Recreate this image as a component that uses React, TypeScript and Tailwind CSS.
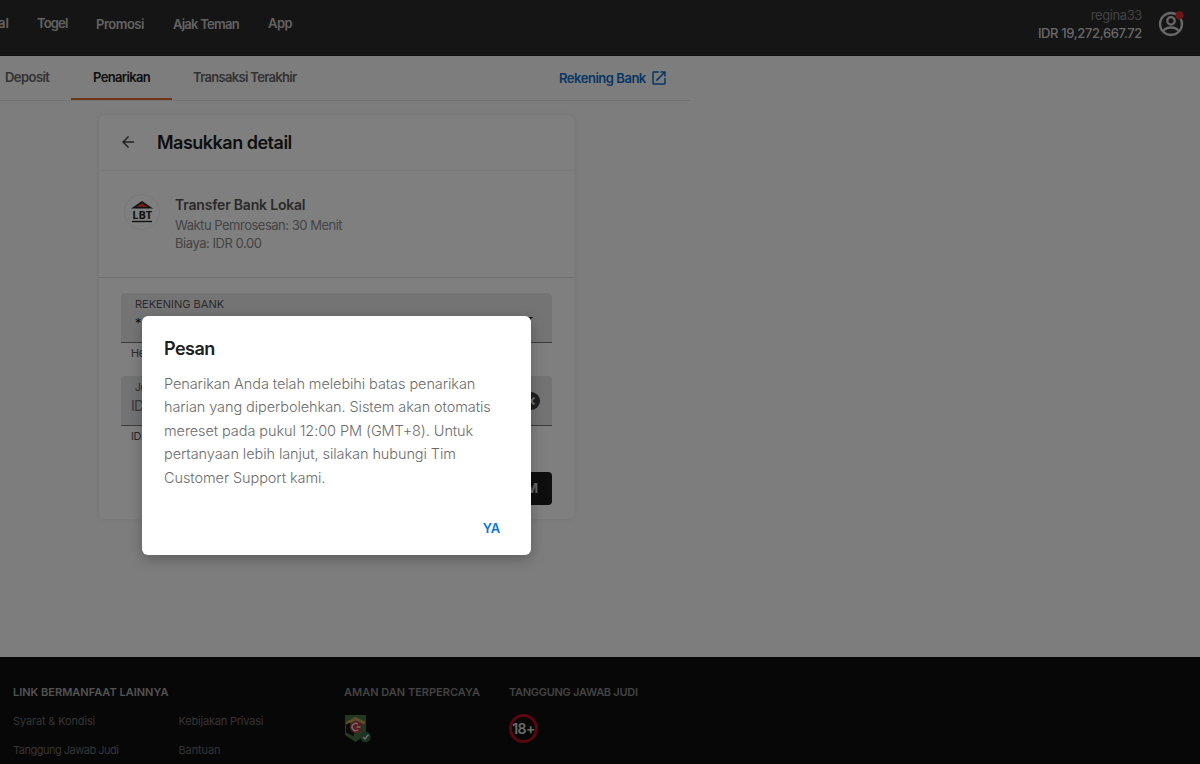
import clsx from 'clsx';
import { MdArrowBack, MdOpenInNew } from 'react-icons/md';

const navItems = [
  { label: 'al', className: 'ml-[-2px] w-[39px]' },
  { label: 'Togel', className: 'w-[59px] tracking-[-0.850px]' },
  { label: 'Promosi', className: 'w-[77px] pt-px tracking-[-0.5px]' },
  { label: 'Ajak Teman', className: 'w-[95px] pt-px tracking-[-0.750px]' },
  { label: 'App', className: 'tracking-[-0.550px]' },
];

const footerLinks = [
  { label: 'Syarat & Kondisi', className: 'tracking-[-0.150px]' },
  { label: 'Kebijakan Privasi', className: 'tracking-[-0.200px]' },
  { label: 'Tanggung Jawab Judi', className: 'tracking-[-0.500px]' },
  { label: 'Bantuan', className: 'tracking-[-0.100px]' },
];

const UserIcon = () => (
  <svg width="26" height="26" viewBox="0 0 26 26" fill="none">
    <g stroke="#d0d0d0" strokeWidth="2.3">
      <circle cx="13" cy="13" r="11" />
      <circle cx="13" cy="9.8" r="3.7" />
      <path d="M5.2 20.2c1.5-2.4 4.4-3.7 7.8-3.7s6.300 1.300 7.800 3.700" />
    </g>
    <circle cx="21.500" cy="4.300" r="4" fill="#d32f36" />
  </svg>
);

const BankLogo = () => (
  <svg width="36" height="36" viewBox="0 0 36 36">
    <circle cx="18" cy="18" r="17.500" fill="#fff" stroke="#eee" />
    <path d="M7 14.500 18 7l11 7.500z" fill="#222" />
    <path d="M12 13.100 18 9l6 4.100z" fill="#e0392c" />
    <text
      x="18.200"
      y="24.500"
      textAnchor="middle"
      fontSize="11"
      fontWeight="700"
      fontFamily="Open Sans, sans-serif"
      fill="#222"
    >
      LBT
    </text>
    <path d="M8 27.500h20" stroke="#222" strokeWidth="1.400" />
  </svg>
);

const SecurityBadge = () => (
  <svg width="28" height="30" viewBox="0 0 28 30" className="-ml-px">
    <path d="M2 1h21v20l-10.500 7L2 21z" fill="#47703e" />
    <path d="M3 8l9.500-5L22 7.500v3L12.500 6.500 3 11z" fill="#c09a5c" />
    <path d="M3 10.500l4-2 4 10v4l-8-4z" fill="#161616" />
    <circle cx="13" cy="13" r="6" fill="#b8343a" />
    <path
      d="M15 10.200a3.600 3.600 0 1 0 0 5.600M13.500 13h4"
      fill="none"
      stroke="#e4dada"
      strokeWidth="1.400"
    />
    <circle cx="22.500" cy="23" r="5.200" fill="#386447" />
    <path d="m20 23 2 2 3.500-4.500" fill="none" stroke="#ddd" strokeWidth="1.300" />
  </svg>
);

const Header = () => (
  <header className="flex h-[56px] justify-between border-b border-[#202020] bg-[#2a2a2a]">
    <nav className="flex pt-[14px] text-[13px] leading-[19px] font-semibold text-[#c4c4c4]">
      {navItems.map(({ label, className }) => (
        <a key={label} className={clsx('block', className)}>
          {label}
        </a>
      ))}
    </nav>

    <div className="flex gap-[16px] pt-[6px] pr-[16px]">
      <div className="text-right text-[13px] leading-[18px]">
        <div className="tracking-[-0.400px] text-[#858585]">regina33</div>
        <div className="font-medium tracking-[-0.370px] text-[#d0d0d0]">
          IDR 19,272,667.72
        </div>
      </div>
      <div className="pt-[5px]">
        <UserIcon />
      </div>
    </div>
  </header>
);

const Tabs = () => (
  <div className="flex h-[45px] w-[691px] border-b border-[#e9e9e9] text-[13px] leading-[42px] font-semibold text-[#666]">
    <div className="w-[71px] pl-[5px] tracking-[-0.550px]">Deposit</div>
    <div className="h-[44px] w-[101px] border-b-2 border-[#e06a2a] pl-[22px] tracking-[-0.650px] text-[#222]">
      Penarikan
    </div>
    <div className="w-[387px] pl-[21px] tracking-[-0.680px]">Transaksi Terakhir</div>
    <div className="flex items-center gap-[4px] tracking-[-0.470px] text-[#0c6dc9]">
      Rekening Bank
      <MdOpenInNew size={18} />
    </div>
  </div>
);

const WithdrawCard = () => (
  <section className="mt-[14px] ml-[99px] h-[404px] w-[475px] rounded-md bg-white shadow-[0_0_6px_#00000012]">
    <div className="flex h-[56px] items-center gap-[20px] border-b border-[#f0f0f0] pb-px pl-[20px]">
      <MdArrowBack size={18} className="text-[#444]" />
      <h1 className="text-[18px] font-semibold tracking-[-0.5px] text-[#1c1c1c]">
        Masukkan detail
      </h1>
    </div>

    <div className="flex h-[107px] gap-[15px] border-b border-[#dcdcdc] pt-[23px] pl-[25px]">
      <BankLogo />
      <div className="text-[13px] leading-[18px] text-[#888]">
        <div className="mb-px text-[14px] leading-[21px] font-semibold tracking-[-0.200px] text-[#555]">
          Transfer Bank Lokal
        </div>
        <div className="tracking-[-0.490px]">Waktu Pemrosesan: 30 Menit</div>
        <div className="tracking-[-0.460px]">Biaya: IDR 0.00</div>
      </div>
    </div>

    <div className="px-[22px] pt-[15px] text-[11px] text-[#555]">
      <div className="h-[50px] rounded-t border-b border-[#777] bg-[#e9e9e9] pt-[3px] pl-[14px]">
        <div className="leading-[17px] tracking-[0.010px]">REKENING BANK</div>
        <div className="flex items-start justify-between pr-[19px] text-[13px] leading-[18px] text-[#222]">
          <span className="pt-px">*</span>
          <span className="mt-[4px] h-[5px] w-[10px] bg-[#222] [clip-path:polygon(0_0,100%_0,50%_100%)]" />
        </div>
      </div>
      <div className="h-[33px] pt-px pl-[10px] leading-[18px] tracking-[-0.5px]">He</div>

      <div className="flex h-[50px] justify-between rounded-t border-b border-[#777] bg-[#e5e6e8] pt-[3px] pr-[11px] pl-[10px]">
        <div>
          <div className="pl-[4px] text-[10px] leading-[17px] tracking-[-0.5px]">Ju</div>
          <div className="text-[14px] leading-[20px] tracking-[-0.800px] text-[#777]">ID</div>
        </div>
        <svg width="20" height="20" viewBox="0 0 20 20" className="mt-[12px]">
          <circle cx="10" cy="10" r="9" fill="#3c3c3c" />
          <path d="m6.500 6.500 7 7m0-7-7 7" stroke="#d9dadc" strokeWidth="2" />
        </svg>
      </div>
      <div className="h-[46px] pt-px pl-[10px] leading-[18px] tracking-[-0.5px]">ID</div>

      <button className="ml-auto block h-[33px] rounded bg-[#1c1c1c] px-[14px] text-[13px] font-bold text-[#ccc]">
        KIRIM
      </button>
    </div>
  </section>
);

const Footer = () => (
  <footer className="mt-[138px] flex h-[107px] bg-[#0e0e0e] pt-[27px] pl-[13px] text-[11px] leading-[16px] text-[#686868]">
    <div className="w-[331px]">
      <h2 className="font-semibold text-[#a5a5a5]">LINK BERMANFAAT LAINNYA</h2>
      <div className="mt-[13px] grid grid-cols-2 gap-y-[13px]">
        {footerLinks.map(({ label, className }) => (
          <a key={label} className={className}>
            {label}
          </a>
        ))}
      </div>
    </div>

    <div className="w-[165px]">
      <h2 className="font-semibold text-[#858585]">AMAN DAN TERPERCAYA</h2>
      <div className="mt-[14px]">
        <SecurityBadge />
      </div>
    </div>

    <div>
      <h2 className="font-semibold tracking-[-0.280px] text-[#858585]">
        TANGGUNG JAWAB JUDI
      </h2>
      <div className="mt-[14px] flex h-[29px] w-[29px] items-center justify-center rounded-full border-[3px] border-[#b40c20] text-[14px] font-semibold tracking-[-0.600px] text-[#d5d5d5]">
        18+
      </div>
    </div>
  </footer>
);

const MessageDialog = () => (
  <div
    role="dialog"
    className="absolute top-[316px] left-[142px] h-[239px] w-[389px] rounded-md bg-white px-[22px] pt-[20px] shadow-[0_4px_14px_#00000040]"
  >
    <h2 className="text-[18px] leading-[25px] font-semibold tracking-[-0.500px] text-[#212121]">
      Pesan
    </h2>
    <p className="mt-[11px] text-[14.500px] leading-[23.400px] font-[350] tracking-[-0.080px] whitespace-nowrap text-[#6c6c6c]">
      Penarikan Anda telah melebihi batas penarikan
      <br />
      harian yang diperbolehkan. Sistem akan otomatis
      <br />
      mereset pada pukul 12:00 PM (GMT+8). Untuk
      <br />
      pertanyaan lebih lanjut, silakan hubungi Tim
      <br />
      Customer Support kami.
    </p>
    <button className="mt-[29px] mr-[9px] ml-auto block text-[13px] leading-[20px] font-semibold tracking-[-0.200px] text-[#0c76d8]">
      YA
    </button>
  </div>
);

export default function App() {
  return (
    <div className="relative h-[764px] w-[1200px] overflow-hidden bg-[#fafafa] font-['Inter',sans-serif]">
      <Header />
      <Tabs />
      <WithdrawCard />
      <Footer />
      <div className="absolute inset-0 bg-black/50" />
      <MessageDialog />
    </div>
  );
}
